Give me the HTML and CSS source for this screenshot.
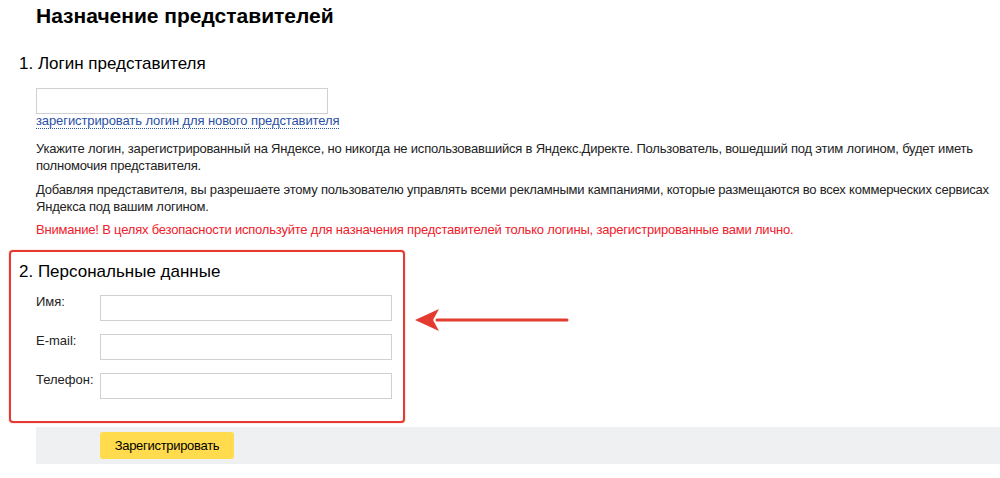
FILE: index.html
```html
<!DOCTYPE html>
<html lang="ru">
<head>
    <meta charset="UTF-8">
    <title>Назначение представителей</title>
    <link rel="stylesheet" href="styles.css">
</head>
<body>
    <div class="page">
        <h1 class="title">Назначение представителей</h1>

        <h2 class="step">1. Логин представителя</h2>
        <div class="login">
            <input type="text" class="field login-field">
            <a href="#" class="dotted-link">зарегистрировать логин для нового представителя</a>
        </div>
        <p class="note">Укажите логин, зарегистрированный на Яндексе, но никогда не использовавшийся в Яндекс.Директе. Пользователь, вошедший под этим логином, будет иметь полномочия представителя.</p>
        <p class="note">Добавляя представителя, вы разрешаете этому пользователю управлять всеми рекламными кампаниями, которые размещаются во всех коммерческих сервисах Яндекса под вашим логином.</p>
        <p class="note warning">Внимание! В целях безопасности используйте для назначения представителей только логины, зарегистрированные вами лично.</p>

        <div class="personal">
            <h2 class="step">2. Персональные данные</h2>
            <div class="row">
                <label class="row-label">Имя:</label>
                <input type="text" class="field">
            </div>
            <div class="row">
                <label class="row-label">E-mail:</label>
                <input type="text" class="field">
            </div>
            <div class="row">
                <label class="row-label">Телефон:</label>
                <input type="text" class="field">
            </div>
        </div>

        <div class="actions">
            <button class="submit">Зарегистрировать</button>
        </div>

        <svg class="arrow" width="160" height="30" viewBox="0 0 160 30">
            <line x1="22" y1="15" x2="152" y2="15" stroke="#e53a2f" stroke-width="3" stroke-linecap="round"/>
            <polygon points="0,15 24,4 18,15 24,26" fill="#e53a2f"/>
        </svg>
    </div>
</body>
</html>
```

FILE: styles.css
```css
body {
    margin: 0;
    background: #fff;
    color: #000;
    font-family: 'Liberation Sans', Arial, sans-serif;
}

.page {
    position: relative;
    padding-left: 36px;
}

.title {
    margin: 0;
    padding-top: 2px;
    font-size: 21px;
    line-height: 28px;
    font-weight: bold;
}

.step {
    margin: 0 0 0 -17px;
    font-size: 17px;
    font-weight: normal;
    line-height: 22px;
}

.page > .step {
    margin-top: 23px;
}

.login {
    margin-top: 13px;
    display: flex;
    flex-direction: column;
    align-items: flex-start;
}

.field {
    box-sizing: border-box;
    width: 292px;
    height: 26px;
    margin: 0;
    border: 1px solid #d0d0d0;
    background: #fff;
}

.dotted-link {
    font-size: 13px;
    line-height: 14px;
    color: #2a4fa6;
    text-decoration: none;
    border-bottom: 1px dotted #2a4fa6;
    letter-spacing: -0.1px;
}

.note {
    margin: 11px 0 0;
    font-size: 13px;
    line-height: 17px;
    letter-spacing: -0.2px;
    color: #222;
}

.note + .note {
    margin-top: 7px;
}

.note + .warning {
    margin-top: 6px;
}

.warning {
    color: #f0202a;
}

.personal {
    margin: 12px 0 0 -27px;
    padding: 9px 0 0 8px;
    box-sizing: border-box;
    width: 396px;
    height: 173px;
    border: 2px solid #e53a2f;
    border-radius: 4px;
    box-shadow: 0 0 1px #e53a2f;
}

.personal .step {
    margin-left: 0;
}

.row {
    display: flex;
    margin: 0 0 13px 17px;
}

.personal .step + .row {
    margin-top: 12px;
}

.row-label {
    width: 64px;
    font-size: 13px;
    line-height: 14px;
    padding-top: 0;
    color: #222;
}

.actions {
    margin-top: 4px;
    height: 37px;
    padding: 5px 0 0 64px;
    box-sizing: border-box;
    background: #eff0f2;
}

.submit {
    width: 134px;
    height: 27px;
    padding: 0;
    border: none;
    border-radius: 3px;
    background: #ffdb4d;
    color: #000;
    font-family: 'Liberation Sans', Arial, sans-serif;
    font-size: 13px;
    letter-spacing: -0.3px;
}

.arrow {
    position: absolute;
    left: 415px;
    top: 305px;
}
```
